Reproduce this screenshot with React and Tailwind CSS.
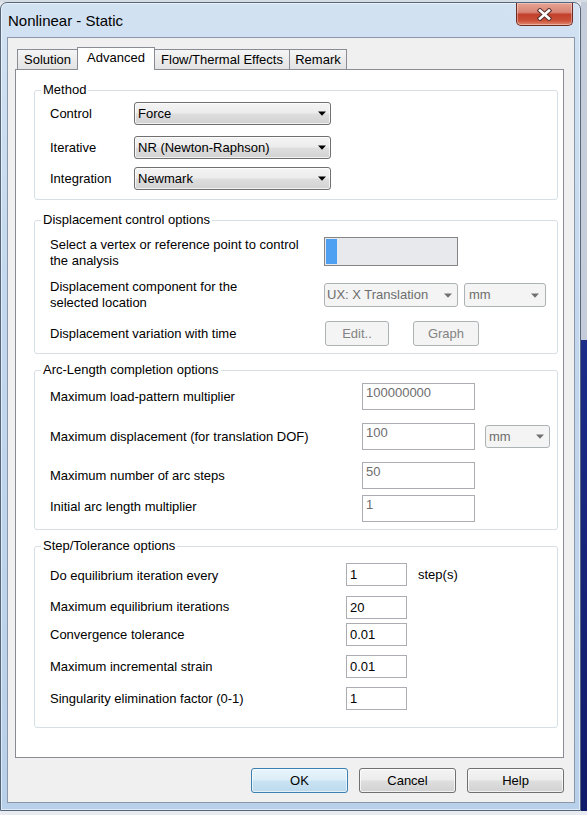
const Arrow = ({ color = "#000" }) => (
  <svg width="8" height="5" viewBox="0 0 8 5" className="shrink-0">
    <path d="M0 0.5H8L4 4.8Z" fill={color} />
  </svg>
);

function Combo({ className, children, disabled }) {
  return (
    <div
      className={`${className} flex items-center justify-between rounded-[3px] border ${
        disabled
          ? "border-[#adb2b5] bg-[#f4f4f4] text-[#6d6d6d]"
          : "border-[#707070] bg-[linear-gradient(to_bottom,#f4f4f4_0%,#ececec_48%,#dedede_52%,#d2d2d2_100%)] text-black shadow-[inset_0_0_0_1px_rgba(255,255,255,0.7)]"
      }`}
    >
      <span className="whitespace-nowrap">{children}</span>
      <Arrow color={disabled ? "#707070" : "#000"} />
    </div>
  );
}

function Group({ title, className, children }) {
  return (
    <div className={`w-[524px] shrink-0 border border-[#d5dfe5] rounded-[3px] flex flex-col ${className}`}>
      <div className="-mt-[9px] ml-[6px] px-[2px] bg-white self-start leading-[16px] whitespace-nowrap">{title}</div>
      <div className="pl-[15px] flex flex-col">{children}</div>
    </div>
  );
}

function ArcInput({ value }) {
  return (
    <div className="w-[113px] h-[27px] border border-[#abadb3] bg-white pl-[3px] pt-[1px] text-[#6d6d6d]">{value}</div>
  );
}

function StepInput({ value }) {
  return (
    <div className="w-[61px] h-[23px] border border-[#abadb3] bg-white pl-[3px] flex items-center text-black">{value}</div>
  );
}

function Btn({ children, primary }) {
  return (
    <div
      className={`w-[97px] h-[25px] rounded-[3px] border flex items-center justify-center ${
        primary
          ? "border-[#3c7fb1] bg-[linear-gradient(to_bottom,#e8f4fb_0%,#dbedf8_48%,#c9e3f3_52%,#bcd9ec_100%)] shadow-[inset_0_0_0_1px_rgba(255,255,255,0.6)]"
          : "border-[#707070] bg-[linear-gradient(to_bottom,#f4f4f4_0%,#ececec_48%,#dedede_52%,#d2d2d2_100%)] shadow-[inset_0_0_0_1px_rgba(255,255,255,0.7)]"
      }`}
    >
      {children}
    </div>
  );
}

function CloseButton() {
  return (
    <div className="mr-[7px] w-[57px] h-[23px] rounded-b-[5px] border border-t-0 border-[#6e2b22] bg-[linear-gradient(to_bottom,#e6a394_0%,#d98474_42%,#c2402b_52%,#cc5038_80%,#e08a72_100%)] shadow-[inset_0_0_0_1px_rgba(255,255,255,0.35)] flex items-center justify-center">
      <svg width="17" height="13" viewBox="0 0 17 13">
        <path d="M4 2.5 L13 10.5 M13 2.5 L4 10.5" stroke="#5a3330" strokeWidth="4.6" strokeLinecap="square" />
        <path d="M4 2.5 L13 10.5 M13 2.5 L4 10.5" stroke="#ffffff" strokeWidth="2.6" strokeLinecap="square" />
      </svg>
    </div>
  );
}

function Window() {
  return (
    <div className="w-[581px] h-[809px] shrink-0 flex flex-col rounded-t-[7px] border border-[#56667a] bg-[linear-gradient(to_bottom,#d2e2f3_0%,#c3d8ee_35%,#b9d0ea_100%)] shadow-[inset_0_0_0_1px_rgba(255,255,255,0.55)]">
      <div className="h-[34px] shrink-0 flex items-start justify-between">
        <div className="pl-[7px] pt-[9px] text-[15px] leading-[18px] text-black">Nonlinear - Static</div>
        <CloseButton />
      </div>
      <div className="ml-[6px] w-[568px] h-[766px] shrink-0 border border-[#8a98aa] bg-[#f0f0f0] flex flex-col pt-[9px] pl-[7px]">
        {/* Tabs */}
        <div className="h-[22px] flex items-end pl-[2px]">
          <div className="w-[61px] h-[20px] border border-b-0 border-[#898c95] bg-[linear-gradient(to_bottom,#f5f5f5,#e3e3e3)] flex items-center justify-center">Solution</div>
          <div className="-ml-px w-[78px] h-[23px] -mb-px relative z-10 border border-b-0 border-[#898c95] bg-white flex items-center justify-center pb-[2px]">Advanced</div>
          <div className="-ml-px w-[136px] h-[20px] border border-b-0 border-[#898c95] bg-[linear-gradient(to_bottom,#f5f5f5,#e3e3e3)] flex items-center justify-center">Flow/Thermal Effects</div>
          <div className="-ml-px w-[58px] h-[20px] border border-b-0 border-[#898c95] bg-[linear-gradient(to_bottom,#f5f5f5,#e3e3e3)] flex items-center justify-center">Remark</div>
        </div>
        {/* Panel */}
        <div className="w-[549px] h-[689px] shrink-0 border border-[#898c95] bg-white flex flex-col pl-[18px] pt-[20px]">
          <Group title="Method" className="pb-[9px]">
            <div className="flex items-center mt-[4px]">
              <div className="w-[84px]">Control</div>
              <Combo className="w-[197px] h-[23px] pl-[3px] pr-[4px]">Force</Combo>
            </div>
            <div className="flex items-center mt-[11px]">
              <div className="w-[84px]">Iterative</div>
              <Combo className="w-[197px] h-[23px] pl-[3px] pr-[4px]">NR (Newton-Raphson)</Combo>
            </div>
            <div className="flex items-center mt-[8px]">
              <div className="w-[84px]">Integration</div>
              <Combo className="w-[197px] h-[23px] pl-[3px] pr-[4px]">Newmark</Combo>
            </div>
          </Group>

          <Group title="Displacement control options" className="mt-[20px] pb-[7px]">
            <div className="flex items-start mt-[9px]">
              <div className="w-[274px]">Select a vertex or reference point to control<br />the analysis</div>
              <div className="w-[134px] h-[29px] border border-[#858585] p-[1px] bg-[#e8e9ed] flex">
                <div className="w-[11px] h-full bg-[#4f9ff2]" />
              </div>
            </div>
            <div className="flex items-start mt-[10px]">
              <div className="w-[274px]">Displacement component for the<br />selected location</div>
              <Combo disabled className="mt-[4px] w-[134px] h-[24px] pl-[2px] pr-[5px]">UX: X Translation</Combo>
              <Combo disabled className="mt-[4px] ml-[6px] w-[82px] h-[24px] pl-[4px] pr-[6px]">mm</Combo>
            </div>
            <div className="flex items-center mt-[10px]">
              <div className="w-[275px]">Displacement variation with time</div>
              <div className="w-[64px] h-[25px] rounded-[3px] border border-[#adb2b5] bg-[#f4f4f4] text-[#838383] flex items-center justify-center">Edit..</div>
              <div className="ml-[24px] w-[66px] h-[25px] rounded-[3px] border border-[#adb2b5] bg-[#f4f4f4] text-[#838383] flex items-center justify-center">Graph</div>
            </div>
          </Group>

          <Group title="Arc-Length completion options" className="mt-[16px] pb-[7px]">
            <div className="flex items-center mt-[5px]">
              <div className="w-[312px]">Maximum load-pattern multiplier</div>
              <ArcInput value="100000000" />
            </div>
            <div className="flex items-center mt-[13px]">
              <div className="w-[312px]">Maximum displacement (for translation DOF)</div>
              <ArcInput value="100" />
              <Combo disabled className="ml-[10px] w-[65px] h-[23px] pl-[3px] pr-[5px]">mm</Combo>
            </div>
            <div className="flex items-center mt-[12px]">
              <div className="w-[312px]">Maximum number of arc steps</div>
              <ArcInput value="50" />
            </div>
            <div className="flex items-center mt-[6px]">
              <div className="w-[312px] -mt-[3px]">Initial arc length multiplier</div>
              <ArcInput value="1" />
            </div>
          </Group>

          <Group title="Step/Tolerance options" className="mt-[16px] pb-[17px]">
            <div className="flex items-center mt-[9px]">
              <div className="w-[296px] mt-[3px]">Do equilibrium iteration every</div>
              <StepInput value="1" />
              <div className="ml-[11px]">step(s)</div>
            </div>
            <div className="flex items-center mt-[10px]">
              <div className="w-[296px] -mt-[2px]">Maximum equilibrium iterations</div>
              <StepInput value="20" />
            </div>
            <div className="flex items-center mt-[4px]">
              <div className="w-[296px] mt-[1px]">Convergence tolerance</div>
              <StepInput value="0.01" />
            </div>
            <div className="flex items-center mt-[9px]">
              <div className="w-[296px]">Maximum incremental strain</div>
              <StepInput value="0.01" />
            </div>
            <div className="flex items-center mt-[9px]">
              <div className="w-[296px] mt-[1px]">Singularity elimination factor (0-1)</div>
              <StepInput value="1" />
            </div>
          </Group>
        </div>
        {/* Buttons */}
        <div className="mt-[10px] w-[549px] flex justify-end gap-[11px]">
          <Btn primary>OK</Btn>
          <Btn>Cancel</Btn>
          <Btn>Help</Btn>
        </div>
      </div>
    </div>
  );
}

export default function App() {
  return (
    <div className="w-[587px] h-[815px] overflow-hidden flex flex-col bg-[#e4e8ed] font-['Liberation_Sans',Arial,sans-serif] text-[13px] leading-[16px] text-black">
      <div className="h-[2px] shrink-0 bg-[#d6dce4]" />
      <div className="flex h-[809px] shrink-0">
        <Window />
        <div className="w-[6px] flex flex-col">
          <div className="h-[338px] bg-[#c4cdd9]" />
          <div className="flex-1 bg-[linear-gradient(to_bottom,#1c2c88,#101a6a)]" />
        </div>
      </div>
      <div className="flex-1 bg-[#e8ebef]" />
    </div>
  );
}
